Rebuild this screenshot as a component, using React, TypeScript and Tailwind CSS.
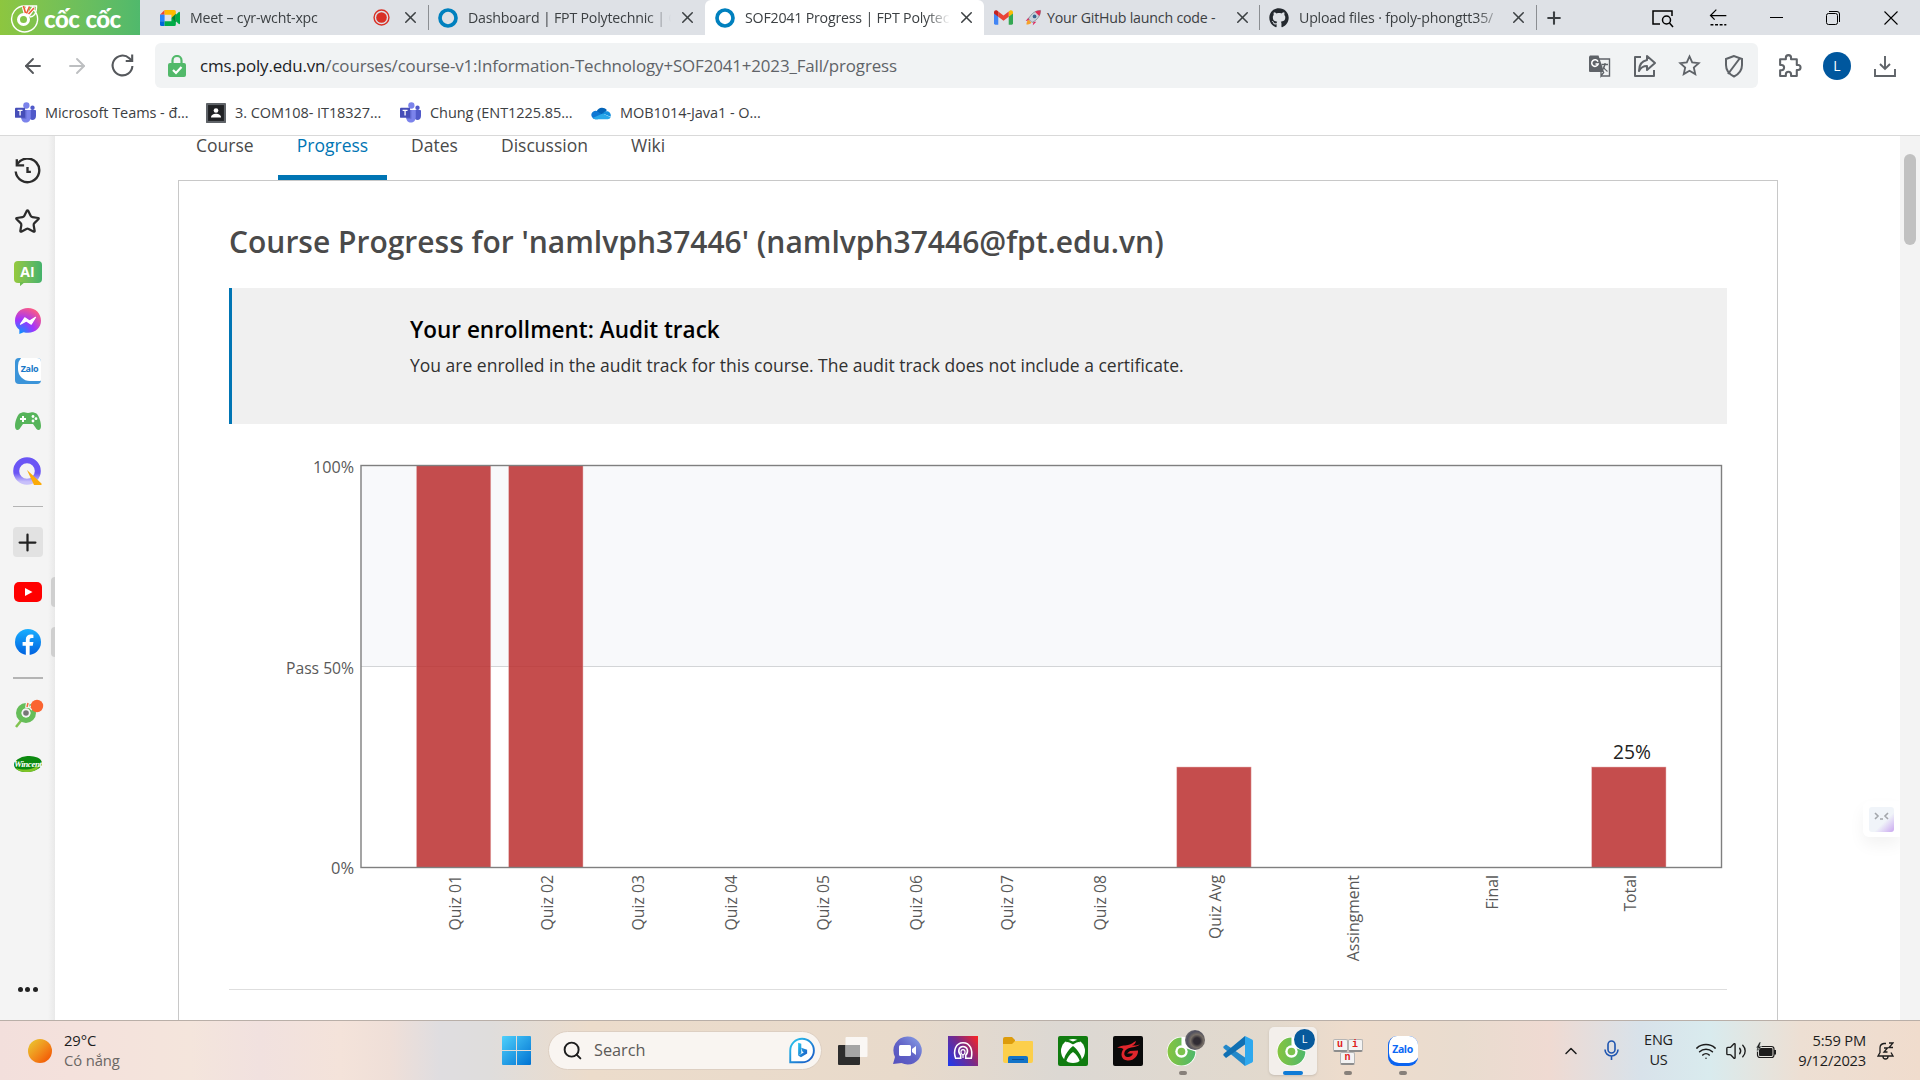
import React from "react";
import { X, Plus, ArrowLeft, ArrowRight, Star, Search, ChevronUp, Wifi, Volume2 } from "lucide-react";
import { FaGithub } from "react-icons/fa";

type Kids = { children?: React.ReactNode };

function Svg({ s = 24, w, h, vb = "0 0 24 24", className = "", children }: Kids & { s?: number; w?: number; h?: number; vb?: string; className?: string }) {
  return (
    <svg width={w ?? s} height={h ?? s} viewBox={vb} fill="none" className={"shrink-0 " + className}>
      {children}
    </svg>
  );
}

const Ring = () => (
  <Svg s={20}>
    <circle cx="12" cy="12" r="9.6" stroke="#0080be" strokeWidth="4.4" />
  </Svg>
);

const MeetIcon = () => (
  <Svg w={20} h={16} vb="0 0 24 19">
    <path d="M5.5 0v5.5H0z" fill="#ea4335" />
    <path d="M0 5.5h5.5v8H0z" fill="#2684fc" />
    <path d="M0 13.5h5.5V19H1.8A1.8 1.8 0 0 1 0 17.2z" fill="#0066da" />
    <path d="M5.5 13.5h8.2v-4l5.3 4v3.7A1.8 1.8 0 0 1 17.2 19H5.5z" fill="#00ac47" />
    <path d="M5.5 0h11.7A1.8 1.8 0 0 1 19 1.8V5.5l-5.3 4v-4H5.5z" fill="#ffba00" />
    <path d="m13.700 9.500 5.300-5v10z" fill="#00832d" />
    <path d="m19 5.500 3.600-3.200c.5-.4 1.400-.1 1.400.7v13c0 .8-.9 1.100-1.400.7L19 13.500z" fill="#00ac47" />
  </Svg>
);

const Gmail = () => (
  <Svg w={19} h={15} vb="0 0 24 18">
    <path d="M0 3v13.400A1.600 1.600 0 0 0 1.600 18h3.800V7z" fill="#4285f4" />
    <path d="M24 3v13.400a1.600 1.600 0 0 1-1.600 1.600h-3.800V7z" fill="#34a853" />
    <path d="M18.600 1.500V8L24 4V2.200c0-2-2.300-3.100-3.900-1.900z" fill="#fbbc04" />
    <path d="M5.400 8V1.500L12 6.500l6.600-5V8L12 13z" fill="#ea4335" />
    <path d="M0 2.200V4l5.400 4V1.500L3.900.300C2.300-.900 0 .200 0 2.200z" fill="#c5221f" />
  </Svg>
);

const Rocket = () => (
  <Svg s={17}>
    <path d="M5 12 1 17l6-1z" fill="#e0245e" />
    <path d="m12 18-1 5 5-5z" fill="#e0245e" />
    <path d="M22 2c-7 0-13 4-17 12l5 5C18 15 22 9 22 2z" fill="#c9d3dc" stroke="#77828c" />
    <path d="M22 2c-3 0-6 .6-8 2l6 6c1.300-2 2-5 2-8z" fill="#dd2e54" />
    <circle cx="13.500" cy="10.500" r="2.600" fill="#39668f" />
    <path d="M5 15c-2 1-3 4-3 7 3 0 6-1 7-3z" fill="#f6a12b" />
  </Svg>
);

const Teams = () => (
  <Svg s={21}>
    <circle cx="20" cy="6.500" r="2.500" fill="#5059c9" />
    <circle cx="13" cy="4" r="3.600" fill="#7b83eb" />
    <path d="M16 9h7a1 1 0 0 1 1 1v6c0 3-2 4.600-4 4.600S16 19 16 16z" fill="#5059c9" />
    <path d="M7 9h11v8c0 4-2.500 6.500-5.600 6.500S7 21 7 17z" fill="#7b83eb" />
    <path d="M7 9h6v10H7.500L7 17z" fill="#4b53bc" opacity=".5" />
    <rect y="6.500" width="11.500" height="11.500" rx="1" fill="#464eb8" />
    <path d="M3 9.500h5.600M5.800 9.500V15.500" stroke="#fff" strokeWidth="1.500" />
  </Svg>
);

const ClassIcon = () => (
  <Svg s={20}>
    <rect width="24" height="24" rx="1" fill="#5f6368" />
    <rect x="2.500" y="2.500" width="19" height="19" fill="#202124" />
    <circle cx="12" cy="9" r="2.800" fill="#fff" />
    <path d="M6 17.500c0-3 3-4.500 6-4.500s6 1.500 6 4.500z" fill="#fff" />
  </Svg>
);

const OneDrive = () => (
  <Svg w={20} h={14} vb="0 0 24 15">
    <path d="M7 5A7 7 0 0 1 19 4l-4 6H3z" fill="#0364b8" />
    <path d="M1 12A5 5 0 0 1 7 5l9 6-8 4H5a5 5 0 0 1-4-3z" fill="#0f78d4" />
    <path d="M14 8a6 6 0 0 1 6-2.500A5 5 0 0 1 23.500 12z" fill="#1490df" />
    <path d="M2 13.500 14 8l9.600 4.500A4 4 0 0 1 20 15H5a5 5 0 0 1-3-1.500z" fill="#28a8ea" />
  </Svg>
);

function CocCocMark({ s = 30 }: { s?: number }) {
  return (
    <Svg s={s} vb="0 0 30 30">
      <defs>
        <linearGradient id="cc" x1="0" y1="0" x2="1" y2="0">
          <stop stopColor="#86c440" />
          <stop offset="1" stopColor="#4fb86a" />
        </linearGradient>
      </defs>
      <circle cx="14" cy="16" r="14.300" fill="#fff" />
      <path d="M14 2.500A13.500 13.500 0 1 0 27.500 16L19 13 14 10z" fill="url(#cc)" />
      <circle cx="14" cy="16" r="6" fill="#fff" />
      <circle cx="14" cy="16" r="3.700" fill="#7cc24e" />
    </Svg>
  );
}

function Tab({ icon, title, className, active, extra }: { icon: React.ReactNode; title: string; className: string; active?: boolean; extra?: React.ReactNode }) {
  return (
    <div className={"flex h-[35px] shrink-0 items-center " + (active ? "rounded-t-md bg-white " : "") + className}>
      <span className="flex w-5 shrink-0 justify-center">{icon}</span>
      <span className="ml-[10px] flex min-w-0 flex-1 items-center overflow-hidden whitespace-nowrap text-[14.200px] tracking-[-0.2px] text-[#3c4043] [mask-image:linear-gradient(to_right,black_calc(100%-24px),transparent)]">{title}</span>
      {extra}
      <X size={19} strokeWidth={1.900} className="ml-[7px] mr-[8px] shrink-0 text-[#3c4043]" />
    </div>
  );
}

const Sep = () => <div className="h-[25px] w-px shrink-0 bg-[#8b8e92]" />;

function TabStrip() {
  return (
    <div className="flex h-[35px] items-center bg-[#dee1e6]">
      <div className="flex h-[35px] w-[140px] shrink-0 items-center bg-linear-to-r from-[#8dc63f] to-[#50b96c] pl-[9px]">
        <Svg w={30} h={30} vb="0 0 30 30">
          <path d="M24.500 6.500A13 13 0 1 1 16 3H27.500Q28 13 21 14" stroke="#fff" strokeWidth="1.400" />
          <circle cx="14.500" cy="16.500" r="5" stroke="#fff" strokeWidth="3" />
          <path d="m14.500 4 2 7M19 3l-1.500 8M25 4l-6 9" stroke="#fff" strokeWidth="3.400" />
          <path d="m14.500 3 2 7M20.500 3.500l-3 7M25 5l-5.500 6" stroke="#ee5a35" strokeWidth="1.600" />
        </Svg>
        <div className="ml-[5px] mt-[3px] flex gap-[6px] font-[Lato] text-[24px] font-black leading-none tracking-[-0.5px] text-white">
          <span>cốc</span>
          <span>cốc</span>
        </div>
      </div>
      <Tab className="w-[288px] pl-[20px]" icon={<MeetIcon />} title="Meet – cyr-wcht-xpc" extra={<Svg s={17} className="mr-[4px]"><circle cx="12" cy="12" r="10.500" stroke="#d93025" strokeWidth="2" /><circle cx="12" cy="12" r="7.500" fill="#d93025" /></Svg>} />
      <Sep />
      <Tab className="w-[276px] pl-[9px]" icon={<Ring />} title="Dashboard | FPT Polytechnic | C" />
      <Tab active className="w-[279px] pl-[10px]" icon={<Ring />} title="SOF2041 Progress | FPT Polytec" />
      <div className="flex h-[35px] w-[275px] shrink-0 items-center pl-[10px]">
        <Gmail />
        <span className="ml-[12px]"><Rocket /></span>
        <span className="ml-[5px] flex-1 whitespace-nowrap text-[14.200px] tracking-[-0.2px] text-[#3c4043]">Your GitHub launch code -</span>
        <X size={19} strokeWidth={1.900} className="ml-[7px] mr-[7px] shrink-0 text-[#3c4043]" />
      </div>
      <Sep />
      <Tab className="w-[276px] pl-[9px]" icon={<FaGithub size={20} color="#24292f" />} title="Upload files · fpoly-phongtt35/" />
      <Sep />
      <Plus size={20} strokeWidth={2.500} className="ml-[7px] shrink-0 text-[#3c4043]" />
      <div className="ml-[86px] flex items-center text-black">
        <Svg s={24}>
          <path d="M10 18H3V5h19v5" stroke="currentColor" strokeWidth="1.500" />
          <circle cx="16.500" cy="14" r="4" stroke="currentColor" strokeWidth="1.500" />
          <path d="m19.500 17 3.500 4" stroke="currentColor" strokeWidth="1.500" />
        </Svg>
        <Svg s={20} className="ml-[34px]">
          <path d="M22 9H3M10 2 3 9l5 5" stroke="currentColor" strokeWidth="1.500" />
          <path d="M3 20h19" stroke="currentColor" strokeWidth="1.800" strokeDasharray="3.500 2" />
        </Svg>
        <div className="ml-[42px] h-px w-[13px] bg-black" />
        <Svg w={14} h={14} vb="0 0 14 14" className="ml-[43px]">
          <rect x=".500" y="2.500" width="11" height="11" rx="2" stroke="currentColor" />
          <path d="M3 .500h8a2.500 2.500 0 0 1 2.500 2.500v8" stroke="currentColor" />
        </Svg>
        <Svg w={14} h={14} vb="0 0 14 14" className="ml-[44px]">
          <path d="m.500.500 13 13M13.500.500l-13 13" stroke="currentColor" strokeWidth="1.100" />
        </Svg>
      </div>
    </div>
  );
}

function Toolbar() {
  return (
    <div className="flex h-[61px] items-center pl-[21px]">
      <ArrowLeft size={24} strokeWidth={1.900} className="text-[#55585c]" />
      <ArrowRight size={24} strokeWidth={1.900} className="ml-[20px] text-[#bdbfc1]" />
      <Svg s={25} className="ml-[21px]">
        <path d="M21.500 12.500A9.500 9.500 0 1 1 18.500 5l2.500 2.300" stroke="#55585c" strokeWidth="2" />
        <path d="M21.300 1.500v6.200h-6.200" stroke="#55585c" strokeWidth="2" />
      </Svg>
      <div className="ml-[20px] flex h-[45px] w-[1603px] items-center rounded-md bg-[#f1f3f4] pl-[13px] pr-[12px]">
        <Svg w={18} h={22} vb="0 0 18 22">
          <path d="M4.500 9V5.500a4.500 4.500 0 0 1 9 0V9" stroke="#52b96a" strokeWidth="2.200" />
          <rect y="8" width="18" height="14" rx="2" fill="#52b96a" />
          <path d="m5 15 3 3 5.500-6" stroke="#fff" strokeWidth="2.200" />
        </Svg>
        <div className="ml-[14px] flex-1 text-[16.900px] tracking-[-0.130px] text-[#5f6368]"><span className="text-[#202124]">cms.poly.edu.vn</span>/courses/course-v1:Information-Technology+SOF2041+2023_Fall/progress</div>
        <div className="flex items-center gap-[21px] text-[#5f6368]">
          <Svg s={24}>
            <path d="M10 5h11.500v17H13" stroke="currentColor" strokeWidth="1.400" />
            <path d="M2 1.500h8.500L16 18H2a1 1 0 0 1-1-1V2.500z" fill="currentColor" />
            <path d="M10 7.600A3.300 3.300 0 1 0 10.200 10H7.500" stroke="#fff" strokeWidth="1.500" />
            <path d="M13.500 10.500H20M17 9v1.500c-.5 3-1.500 4.500-3 6M15 12.500c1 2 2.500 3.500 4.500 5M13 18v4l3-4" stroke="currentColor" strokeWidth="1.300" />
          </Svg>
          <Svg s={24}>
            <path d="M8 3H2v19h19v-6" stroke="currentColor" strokeWidth="2" strokeLinejoin="round" />
            <path d="M14 6V2l8 7-8 7v-4c-4 0-6 1-8 5 0-6 3-10 8-11z" stroke="currentColor" strokeWidth="2" strokeLinejoin="round" />
          </Svg>
          <Svg s={23}>
            <path d="m12 2.500 2.800 6.300 6.800.700-5.100 4.600 1.500 6.900-6-3.500L6 21l1.500-6.900-5.100-4.600 6.800-.700z" stroke="currentColor" strokeWidth="1.900" />
          </Svg>
          <Svg s={24}>
            <path d="M12 2 4 5v6c0 5 3 9 8 11.500 5-2.500 8-6.500 8-11.500V5z" stroke="currentColor" strokeWidth="2" />
            <path d="M18 4 6 20" stroke="currentColor" strokeWidth="2" />
          </Svg>
        </div>
      </div>
      <Svg s={25} className="ml-[19px]">
        <path d="M3 6h5.500V4.500a2.500 2.500 0 0 1 5 0V6H19v5.500h1.200a2.400 2.400 0 0 1 0 4.800H19V22h-5.500v-1.500a2.500 2.500 0 0 0-5 0V22H3v-5.500h1.300a2.500 2.500 0 0 0 0-5H3z" stroke="#5f6368" strokeWidth="2" strokeLinejoin="round" />
      </Svg>
      <div className="ml-[21px] flex size-7 items-center justify-center rounded-full bg-[#00579e] text-[14px] text-white">L</div>
      <Svg s={24} className="ml-[22px]">
        <path d="M12 2v13M7 10l5 5 5-5M2 15v7h20v-7" stroke="#5f6368" strokeWidth="1.900" />
      </Svg>
    </div>
  );
}

function Bookmark({ icon, text, className }: { icon: React.ReactNode; text: string; className: string }) {
  return (
    <div className={"flex shrink-0 items-center " + className}>
      <span className="flex w-[21px] justify-center">{icon}</span>
      <span className="ml-[9px] whitespace-nowrap text-[14.500px] tracking-[-0.060px] text-[#3c4043]">{text}</span>
    </div>
  );
}

const Slot = ({ children, className }: Kids & { className: string }) => <div className={"flex shrink-0 items-center justify-center " + className}>{children}</div>;

function Sidebar() {
  return (
    <aside className="flex w-[55px] shrink-0 flex-col items-center bg-[linear-gradient(to_right,#f4f4f4_48px,#e9e9e9_55px)] pt-[10px]">
      <Slot className="h-[50px]">
        <Svg s={27}>
          <path d="M3 5.500A10.500 10.500 0 1 1 1.500 12" stroke="#2b2b2b" strokeWidth="2.100" />
          <path d="M2.500 1v5.500H9M12 8v4.300h3" stroke="#2b2b2b" strokeWidth="2.100" />
        </Svg>
      </Slot>
      <Slot className="h-[50px]"><Star size={27} strokeWidth={2} color="#2b2b2b" /></Slot>
      <Slot className="h-[51px]">
        <div className="relative flex h-[22px] w-7 items-center justify-center rounded-[4px] bg-linear-to-r from-[#95c93d] to-[#43b26b] text-[14px] font-bold text-white">
          AI
          <span className="absolute left-[6px] top-[21px] h-[5px] w-[6px] bg-[#6dbd4f] [clip-path:polygon(0_0,100%_0,0_100%)]" />
        </div>
      </Slot>
      <Slot className="h-[48px]">
        <Svg s={26}>
          <defs>
            <radialGradient id="msg" cx=".2" cy="1" r="1.100">
              <stop stopColor="#0099ff" />
              <stop offset=".5" stopColor="#a033ff" />
              <stop offset="1" stopColor="#ff5c80" />
            </radialGradient>
          </defs>
          <path d="M12 0C5 0 0 5 0 11.700c0 4 1.500 6 4 8.300v4l4-1.700c1.300.4 2.600.5 4 .5 7 0 12-4.800 12-11.100C24 5 19 0 12 0z" fill="url(#msg)" />
          <path d="m5 15 4-6 4.500 3L19 8.500 15 15l-4.500-3z" fill="#fff" stroke="#fff" strokeLinejoin="round" />
        </Svg>
      </Slot>
      <Slot className="h-[52px]">
        <div className="relative flex size-[26px] items-center justify-center overflow-hidden rounded-[4px] bg-[#3b94d9]">
          <span className="absolute -top-[4px] left-[3px] h-[27px] w-[32px] rounded-[12px] bg-white" />
          <span className="relative -mt-[4px] ml-[4px] text-[9px] font-bold tracking-[-0.4px] text-[#1878c8]">Zalo</span>
        </div>
      </Slot>
      <Slot className="h-[47px]">
        <Svg w={26} h={18} vb="0 0 26 18">
          <path d="M6 1c2-1.500 4 0 7 0s5-1.500 7 0c3 0 6 8 6 13 0 4-2.500 5-4.500 3L18 12H8l-3.500 5C2.500 19 0 18 0 14 0 9 3 1 6 1z" fill="#56b45a" />
          <path d="M8 4v6M5 7h6" stroke="#fff" strokeWidth="2" />
          <g fill="#fff"><circle cx="18" cy="4.500" r="1.400" /><circle cx="18" cy="9" r="1.400" /><circle cx="21" cy="6.700" r="1.400" /></g>
        </Svg>
      </Slot>
      <Slot className="h-[54px]">
        <Svg s={29} vb="0 0 29 29">
          <defs><linearGradient id="qg" x1="0" y1="0" x2="0" y2="1"><stop offset=".6" stopColor="#6a55f5" /><stop offset="1" stopColor="#c8c0fa" /></linearGradient></defs>
          <circle cx="14" cy="14" r="10.800" stroke="url(#qg)" strokeWidth="6" />
          <path d="m14 13 14.500 13.500V28H21z" fill="#fbab09" />
        </Svg>
      </Slot>
      <div className="mt-[8px] h-px w-[30px] shrink-0 bg-[#b4b4b4]" />
      <div className="mt-[20px] flex size-[30px] shrink-0 items-center justify-center rounded-[4px] bg-[#e2e2e2]"><Plus size={27} strokeWidth={2} color="#222" /></div>
      <div className="mt-[20px] flex h-[30px] w-full shrink-0 items-center justify-between pl-[14px]">
        <Svg w={28} h={20} vb="0 0 28 20"><rect width="28" height="20" rx="5" fill="#f00" /><path d="m11 6 7.500 4-7.500 4z" fill="#fff" /></Svg>
        <span className="h-[30px] w-[4px] rounded-l bg-[#cfcfcf]" />
      </div>
      <div className="mt-[20px] flex h-[30px] w-full shrink-0 items-center justify-between pl-[15px]">
        <Svg s={26}>
          <defs><linearGradient id="fb" x1="0" y1="0" x2="0" y2="1"><stop stopColor="#19afff" /><stop offset="1" stopColor="#0062e0" /></linearGradient></defs>
          <circle cx="12" cy="12" r="12" fill="url(#fb)" />
          <path d="M10 24v-8.500H7V12h3V9.500C10 6.500 12 5 14.500 5c1 0 2 .2 2.500.3v3h-1.500c-1.500 0-2 .8-2 2V12H17l-.6 3.500h-2.900V24z" fill="#fff" />
        </Svg>
        <span className="h-[30px] w-[4px] rounded-l bg-[#cfcfcf]" />
      </div>
      <div className="mt-[20px] h-[2px] w-[30px] shrink-0 bg-[#b4b4b4]" />
      <Slot className="mt-[20px] h-[30px] pl-[2px]">
        <Svg s={30} vb="0 0 30 30">
          <path d="m2 28 8-10" stroke="#82c451" strokeWidth="2.500" />
          <circle cx="12" cy="14" r="7.200" stroke="#66bd59" strokeWidth="5.600" />
          <circle cx="12" cy="14" r="4.500" fill="#f4f4f4" />
          <circle cx="12" cy="14" r="2.800" fill="#777" />
          <path d="m13 9 1-6M16 10l6-6" stroke="#f4f4f4" strokeWidth="4" />
          <path d="m13 8 1-4M17 9l4-5" stroke="#f26b3a" strokeWidth="1.500" />
          <circle cx="23" cy="7" r="6.200" fill="#fa6431" />
        </Svg>
      </Slot>
      <Slot className="mt-[20px] h-[30px]">
        <Svg w={30} h={18} vb="0 0 30 18">
          <ellipse cx="15" cy="9" rx="14" ry="8" fill="#0c8a10" transform="rotate(-5 15 9)" />
          <path d="M3 13c8 3 18 2 25-5-2 7-8 9-14 9S5 16 3 13z" fill="#7fc427" />
          <text x="15" y="11.500" fontSize="9" fontStyle="italic" fontWeight="700" fontFamily="Liberation Serif, serif" fill="#fff" textAnchor="middle" textLength="28">Wincent</text>
        </Svg>
      </Slot>
      <div className="mb-[28px] mt-auto flex gap-[2.500px]">
        <i className="size-[5px] rounded-full bg-[#222]" /><i className="size-[5px] rounded-full bg-[#222]" /><i className="size-[5px] rounded-full bg-[#222]" />
      </div>
    </aside>
  );
}

const labels: [string, number][] = [
  ["Quiz 01", 455], ["Quiz 02", 547], ["Quiz 03", 638.5], ["Quiz 04", 731], ["Quiz 05", 823], ["Quiz 06", 916],
  ["Quiz 07", 1007.5], ["Quiz 08", 1100], ["Quiz Avg", 1215.5], ["Assingment", 1353.500], ["Final", 1492], ["Total", 1630],
];
const bars = [[416.500, 465.500], [508.700, 465.500], [1176.800, 767], [1591.700, 767]];

function GradeChart() {
  return (
    <svg className="block" width="1498" height="565" viewBox="229 424 1498 565" fontFamily="Open Sans, sans-serif">
      <rect x="361" y="465.500" width="1360.500" height="201" fill="#f8f9fb" />
      <path d="M361 666.500h1360" stroke="#d3d5d7" />
      {bars.map(([x, y]) => (
        <rect key={x} x={x} y={y} width="74.300" height={867.500 - y} fill="#bb2e2e" fillOpacity=".85" stroke="#e8b9b9" strokeWidth=".5" />
      ))}
      <rect x="361" y="465.500" width="1360.500" height="402" fill="none" stroke="#7f7f7f" strokeWidth="1.400" />
      <g fontSize="16" fill="#595959" textAnchor="end">
        <text x="354" y="473" textLength="41" lengthAdjust="spacingAndGlyphs">100%</text>
        <text x="354" y="673.500" textLength="68" lengthAdjust="spacingAndGlyphs">Pass 50%</text>
        <text x="354" y="874" textLength="23" lengthAdjust="spacingAndGlyphs">0%</text>
        {labels.map(([t, x]) => (
          <text key={t} transform={`translate(${x + 5.500} 875) rotate(-90)`} fontSize="15.800">{t}</text>
        ))}
      </g>
      <text x="1632" y="758.500" fontSize="19.500" fill="#222" textAnchor="middle" textLength="38" lengthAdjust="spacingAndGlyphs">25%</text>
    </svg>
  );
}

function Page() {
  return (
    <main className="relative flex min-w-0 flex-1 flex-col overflow-hidden bg-white font-['Open_Sans',sans-serif]">
      <nav className="ml-[123px] flex h-[44px] shrink-0 text-[17.500px] leading-[18px] text-[#4a4a4a]">
        <span className="w-[100px] pl-[18px]">Course</span>
        <span className="w-[109px] border-b-[5px] border-[#0075b4] text-center text-[#0075b4]">Progress</span>
        <span className="w-[96px] pl-[24px]">Dates</span>
        <span className="w-[130px] pl-[18px]">Discussion</span>
        <span className="pl-[18px]">Wiki</span>
      </nav>
      <section className="ml-[123px] flex w-[1600px] flex-1 flex-col border-x border-t border-[#c8c8c8] pl-[50px]">
        <h1 className="mt-[39px] h-[68px] whitespace-nowrap text-[30px] font-semibold leading-[44px] text-[#4a4a4a]">Course Progress for 'namlvph37446' (namlvph37446@fpt.edu.vn)</h1>
        <div className="h-[136px] w-[1498px] shrink-0 border-l-[3px] border-[#0075b4] bg-[#f0f0f0] pl-[178px] pt-[27px]">
          <h2 className="whitespace-nowrap text-[22.500px] font-semibold leading-[30px] text-black">Your enrollment: Audit track</h2>
          <p className="mt-[7px] whitespace-nowrap text-[17.500px] leading-[26px] text-[#313131]">You are enrolled in the audit track for this course. The audit track does not include a certificate.</p>
        </div>
        <GradeChart />
        <div className="h-px w-[1498px] shrink-0 bg-[#dedede]" />
      </section>
      <div className="absolute right-0 top-[665px] flex h-[36px] w-[37px] items-center justify-center rounded-l-md bg-white pr-[1px] shadow-[0_8px_16px_rgba(0,0,0,0.05)]">
        <div className="flex h-[25px] w-[25px] items-center justify-center rounded-[3px] bg-[linear-gradient(135deg,#f0f4f9_60%,#c9a6f0)]">
          <Svg w={17} h={9} vb="0 0 17 9" className="-mt-[5px]"><path d="m2 1 3 3-3 3M15 1l-3 3 3 3M7 7h3" stroke="#a3a6ab" strokeWidth="1.600" /></Svg>
        </div>
      </div>
    </main>
  );
}

function TaskItem({ children, dot, active }: Kids & { dot?: boolean; active?: boolean }) {
  return (
    <div className="flex w-[55px] shrink-0 justify-center">
      <div className={"relative flex h-12 w-12 items-center justify-center rounded-[5px] " + (active ? "bg-[#f3efeb] shadow-sm" : "")}>
        {children}
        {dot && <span className="absolute bottom-0 h-[4px] w-[8px] rounded-full bg-[#87807a]" />}
        {active && <span className="absolute bottom-0 h-[4px] w-[20px] rounded-full bg-[#0f7bd6]" />}
      </div>
    </div>
  );
}

const Key = ({ children }: Kids) => <span className="flex h-[13px] w-[15px] items-center justify-center rounded-[2px] border border-b-2 border-[#b5b5b5] border-b-[#8d8d8d] bg-[#f3f3f3] font-['Liberation_Mono',monospace] text-[10px] font-bold leading-none text-[#e02020]">{children}</span>;

function Taskbar() {
  return (
    <footer className="flex h-[60px] shrink-0 items-center border-t border-[#b9afa8] bg-[linear-gradient(to_right,#f3dfdc_0,#f4e1dc_70px,#f4e5dc_190px,#f1e1df_260px,#f4e3da_340px,#efdfd8_390px,#dfdde0_440px,#dfdddc_490px,#ecdccb_590px,#e8dacb_900px,#dcd8d3_1060px,#e2d9cd_1270px,#eedccc_1350px,#e9dccf_1460px,#efdad2_1550px,#d8e2ea_1640px,#d9ebee_1710px,#eddfd3_1800px,#f0dccd_1920px)] font-['Open_Sans',sans-serif] text-[#1d1d1d]">
      <div className="ml-[28px] size-6 rounded-full bg-linear-to-br from-[#e9c12e] from-10% to-[#f2640a] to-80%" />
      <div className="-mt-[2px] ml-[12px] w-[438px] text-[14.800px] leading-[20px] tracking-[-0.100px]">
        <div>29°C</div>
        <div className="text-[#6b6764]">Có nắng</div>
      </div>
      <Svg s={29} vb="0 0 29 29">
        <defs><linearGradient id="win" x1="0" y1="0" x2="1" y2="1"><stop stopColor="#4fd0fb" /><stop offset="1" stopColor="#0072d2" /></linearGradient></defs>
        <path d="M0 1a1 1 0 0 1 1-1h13v14H0zM15 0h13a1 1 0 0 1 1 1v13H15zM0 15h14v14H1a1 1 0 0 1-1-1zM15 15h14v13a1 1 0 0 1-1 1H15z" fill="url(#win)" />
      </Svg>
      <div className="ml-[17px] flex h-[39px] w-[274px] shrink-0 items-center rounded-full border border-[#ddcfc2] bg-[#f9f5f1] pl-[13px] pr-[6px]">
        <Search size={21} strokeWidth={2.200} />
        <span className="ml-[11px] flex-1 text-[16.300px] text-[#5c5a58]">Search</span>
        <Svg s={27}>
          <defs><linearGradient id="bing" x1="0" y1="0" x2="1" y2="1"><stop stopColor="#2bc8ee" /><stop offset="1" stopColor="#1753c4" /></linearGradient></defs>
          <path d="M2 22.500V12a10.500 10.500 0 1 1 10.500 10.500z" stroke="url(#bing)" strokeWidth="1.700" fill="#fff" />
          <path d="m9 5 2.800 1v8.500L9 16.500zM11.800 9.500l5.200 1.900v3.300L11.500 18 9 16.500l5-2.800-1.200-.8z" fill="url(#bing)" />
        </Svg>
      </div>
      <div className="ml-[3px] flex">
        <TaskItem>
          <Svg w={30} h={28} vb="0 0 30 28"><rect y="8" width="22" height="20" rx="1" fill="#2d2d2d" /><rect x="7.500" width="22" height="20" rx="1" fill="#fff" fillOpacity=".78" /><rect x="7.500" y="8" width="14.500" height="12" fill="#a5a5a5" /></Svg>
        </TaskItem>
        <TaskItem>
          <Svg s={29} vb="0 0 29 29">
            <defs><linearGradient id="chat" x1="1" y1="0" x2="0" y2="1"><stop stopColor="#8ba4e8" /><stop offset=".5" stopColor="#6264c8" /><stop offset="1" stopColor="#5450bd" /></linearGradient></defs>
            <path d="M14.500.500a14 14 0 1 1-6 26.500L0 28l2-7A14 14 0 0 1 14.500.500z" fill="url(#chat)" />
            <rect x="6" y="9" width="12" height="11" rx="1.500" fill="#fff" /><path d="m19 13 4-3v9l-4-3z" fill="#fff" />
          </Svg>
        </TaskItem>
        <TaskItem>
          <div className="flex size-[30px] items-center justify-center bg-[linear-gradient(55deg,#1b39f0,#7a2a86_55%,#ff2420)]">
            <Svg s={22}>
              <path d="M4 20H9.500V16.500C6 13 7 7 12 7s6.500 6 3 9.500V20H21C23 11 20 3 12 3S1 12 4 20z" stroke="#fff" strokeWidth="1.700" />
              <path d="M12 19.500V16.500c-3-1-3-6 0-6s3 5 0 6" stroke="#fff" strokeWidth="1.300" />
            </Svg>
          </div>
        </TaskItem>
        <TaskItem>
          <Svg w={30} h={27} vb="0 0 30 27">
            <path d="M0 2a2 2 0 0 1 2-2h7l3 3v5H0z" fill="#dd9c0c" /><path d="M0 7h9l3-3h17a1 1 0 0 1 1 1v19a2 2 0 0 1-2 2H2a2 2 0 0 1-2-2z" fill="#fccf4b" />
            <path d="M5 26v-5a2 2 0 0 1 2-2h16a2 2 0 0 1 2 2v5z" fill="#1273c8" /><path d="M9 22.500h12" stroke="#0a4e92" />
          </Svg>
        </TaskItem>
        <TaskItem>
          <Svg s={30} vb="0 0 30 30">
            <rect width="30" height="30" rx="2" fill="#107c10" /><circle cx="15" cy="15" r="12" fill="#fff" />
            <path d="M6 25c0-5 4-11 9-15 5 4 9 10 9 15l-2 1c-1-4-4-8-7-10-3 2-6 6-7 10z" fill="#107c10" />
            <path d="M8 5c2.500-.8 5 .8 7 2 2-1.200 4.500-2.800 7-2" stroke="#107c10" strokeWidth="2.400" />
          </Svg>
        </TaskItem>
        <TaskItem>
          <Svg s={30} vb="0 0 30 30">
            <rect width="30" height="30" rx="2" fill="#0a0a0a" />
            <path d="M4 12c4-3 7-2 11-3 4-1 5-2.500 8-4-.5 2-1.500 3.500-4 4.500 3 0 5 0 8-1-3 2.500-8 2.500-12 4-4.500 2-5 7.500-1 8.500 3 .5 5-1 6-3.500H14l3-2.500 8-.5c.5 5-4 10.500-10.500 10-6.500-.5-7.500-7-4-11.500-2-1-4-1.500-6.500-1z" fill="#e0262c" />
          </Svg>
        </TaskItem>
        <TaskItem dot>
          <div className="relative"><CocCocMark s={31} /><span className="absolute -right-[7px] -top-[5px] size-5 rounded-full bg-[radial-gradient(circle_at_60%_55%,#302c33_0_20%,#766e66_40%,#51515f_60%,#a69d92)]" /></div>
        </TaskItem>
        <TaskItem>
          <Svg s={30} vb="0 0 30 30">
            <path d="M22 0v30L1 12.500a1.500 1.500 0 0 1 0-2.500l2-1.500 19 13z" fill="#2489ca" />
            <path d="M22 0v8.500L3 22l-2-2a1.500 1.500 0 0 1 0-2.500z" fill="#1070b3" />
            <path d="m22 0 7 3.500a2 2 0 0 1 1 1.500v20a2 2 0 0 1-1 1.500L22 30z" fill="#2ea8ee" />
          </Svg>
        </TaskItem>
        <TaskItem active>
          <div className="relative"><CocCocMark s={31} /><span className="absolute -right-[7px] -top-[6px] flex size-[21px] items-center justify-center rounded-full bg-[#075a9c] text-[11px] text-white">L</span></div>
        </TaskItem>
        <TaskItem dot>
          <div className="flex flex-col items-center pt-[2px]"><div className="flex"><Key>u</Key><Key>i</Key></div><Key>n</Key></div>
        </TaskItem>
        <TaskItem dot>
          <div className="relative flex size-[30px] items-center justify-center overflow-hidden rounded-[9px] bg-[#0a63f0]">
            <span className="absolute -top-px left-[1px] h-[28px] w-[30px] rounded-[10px] bg-white" />
            <span className="relative -mt-[2px] text-[10.500px] font-bold tracking-[-0.400px] text-[#0b68f5]">Zalo</span>
          </div>
        </TaskItem>
      </div>
      <div className="ml-auto flex items-center pr-[26px]">
        <ChevronUp size={20} strokeWidth={1.800} />
        <Svg w={15} h={21} vb="0 0 15 21" className="ml-[23px]"><rect x="4" y="1" width="7" height="12" rx="3.500" stroke="#1f55b0" strokeWidth="1.600" /><path d="M1 9.500a6.500 6.500 0 0 0 13 0M7.500 16v4" stroke="#1f55b0" strokeWidth="1.600" /></Svg>
        <div className="-mt-[2px] ml-[24px] w-[31px] text-center text-[14.500px] leading-[20px] tracking-[-0.200px]">ENG<br />US</div>
        <Wifi size={22} strokeWidth={1.700} className="ml-[21px]" />
        <Volume2 size={22} strokeWidth={1.500} className="ml-[8px]" />
        <Svg w={21} h={17} vb="0 0 21 17" className="ml-[9px]">
          <rect x="1.500" y="4.500" width="16.500" height="11" rx="2.500" stroke="#1d1d1d" strokeWidth="1.200" /><rect x="3" y="6" width="13.500" height="8" rx="1" fill="#1d1d1d" /><path d="M19 8v4.500" stroke="#1d1d1d" strokeWidth="2" />
          <path d="M3.500 0 0 6h2.500L1 10l4.500-5.500H3.500L5 0z" fill="#1d1d1d" stroke="#e3ece9" strokeWidth=".5" />
        </Svg>
        <div className="-mt-[2px] ml-[18px] w-[71px] whitespace-nowrap text-right text-[14.700px] leading-[20px] tracking-[-0.200px]">5:59 PM<br />9/12/2023</div>
        <Svg w={17} h={18} vb="0 0 17 18" className="ml-[11px]">
          <path d="M9 1.500H7A4.500 4.500 0 0 0 3 6v4.500L1 14h15l-2-3.500M6 14.500a2.500 2.500 0 0 0 5 0" stroke="#1d1d1d" strokeWidth="1.300" />
          <path d="M7 6h3.500L7 10h3.500M12 1h4l-4 4.500h4" stroke="#1d1d1d" strokeWidth="1.300" />
        </Svg>
      </div>
    </footer>
  );
}

export default function App() {
  return (
    <div className="flex h-[1080px] w-[1920px] flex-col overflow-hidden bg-white font-['Open_Sans',sans-serif]">
      <TabStrip />
      <Toolbar />
      <div className="flex h-[40px] shrink-0 items-center border-b border-[#d9d9d9] pb-[6px] pl-[15px]">
        <Bookmark className="w-[190px]" icon={<Teams />} text="Microsoft Teams - đ..." />
        <Bookmark className="w-[195px]" icon={<ClassIcon />} text="3. COM108- IT18327..." />
        <Bookmark className="w-[190px]" icon={<Teams />} text="Chung (ENT1225.85..." />
        <Bookmark className="w-[190px]" icon={<OneDrive />} text="MOB1014-Java1 - O..." />
      </div>
      <div className="flex min-h-0 flex-1">
        <Sidebar />
        <Page />
        <div className="w-5 shrink-0 bg-[#f3f3f3] px-[4px] pt-[18px]">
          <div className="h-[91px] rounded-full bg-[#c1c1c1]" />
        </div>
      </div>
      <Taskbar />
    </div>
  );
}
